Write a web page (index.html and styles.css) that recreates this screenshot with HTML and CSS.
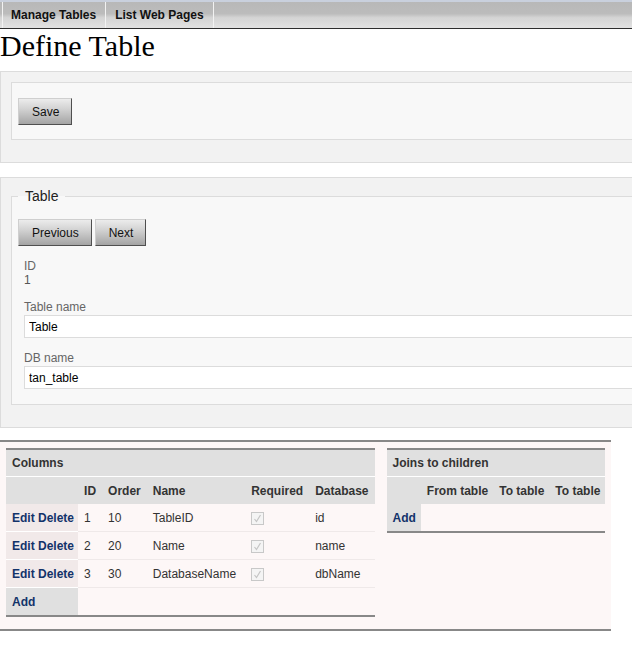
FILE: index.html
```html
<!DOCTYPE html>
<html>
<head>
<meta charset="utf-8">
<title>Define Table</title>
<link rel="stylesheet" href="styles.css">
</head>
<body>
<div class="tabbar">
  <a class="tab" href="#">Manage Tables</a>
  <a class="tab tab-last" href="#">List Web Pages</a>
</div>
<h1 class="title">Define Table</h1>

<div class="panel">
  <fieldset class="box box-plain">
    <div class="btnrow">
      <button class="btn" type="button">Save</button>
    </div>
  </fieldset>
</div>

<div class="panel">
  <fieldset class="box">
    <legend class="legend">Table</legend>
    <div class="btnrow">
      <button class="btn" type="button">Previous</button>
      <button class="btn" type="button">Next</button>
    </div>
    <div class="field">
      <div class="label">ID</div>
      <div class="value">1</div>
    </div>
    <div class="field">
      <div class="label">Table name</div>
      <input class="input" type="text" value="Table">
    </div>
    <div class="field">
      <div class="label">DB name</div>
      <input class="input" type="text" value="tan_table">
    </div>
  </fieldset>
</div>

<div class="grids">
  <table class="grid">
    <tr><th class="cap" colspan="7">Columns</th></tr>
    <tr class="head">
      <th></th><th>ID</th><th>Order</th><th class="namecol">Name</th><th>Required</th><th>Database</th>
    </tr>
    <tr class="row">
      <td class="act"><a href="#">Edit</a> <a href="#">Delete</a></td><td>1</td><td>10</td><td class="namecol">TableID</td><td><span class="chk"><svg width="11" height="11" viewBox="0 0 11 11"><path d="M2.5 6 L4.5 8.5 L8.5 2" fill="none" stroke="#c4c4c4" stroke-width="1.2"/></svg></span></td><td>id</td>
    </tr>
    <tr class="row">
      <td class="act"><a href="#">Edit</a> <a href="#">Delete</a></td><td>2</td><td>20</td><td class="namecol">Name</td><td><span class="chk"><svg width="11" height="11" viewBox="0 0 11 11"><path d="M2.5 6 L4.5 8.5 L8.5 2" fill="none" stroke="#c4c4c4" stroke-width="1.2"/></svg></span></td><td>name</td>
    </tr>
    <tr class="row">
      <td class="act"><a href="#">Edit</a> <a href="#">Delete</a></td><td>3</td><td>30</td><td class="namecol">DatabaseName</td><td><span class="chk"><svg width="11" height="11" viewBox="0 0 11 11"><path d="M2.5 6 L4.5 8.5 L8.5 2" fill="none" stroke="#c4c4c4" stroke-width="1.2"/></svg></span></td><td>dbName</td>
    </tr>
    <tr class="addrow">
      <td class="add"><a href="#">Add</a></td><td></td><td></td><td></td><td></td><td></td>
    </tr>
  </table>

  <table class="grid joins">
    <tr><th class="cap" colspan="4">Joins to children</th></tr>
    <tr class="head">
      <th></th><th>From table</th><th>To table</th><th>To table</th>
    </tr>
    <tr class="addrow">
      <td class="add"><a href="#">Add</a></td><td></td><td></td><td></td>
    </tr>
  </table>
</div>
</body>
</html>
```

FILE: styles.css
```css
html, body {
  margin: 0;
  padding: 0;
  background: #fff;
  overflow: hidden;
}

body {
  font-family: "Liberation Sans", Arial, sans-serif;
  font-size: 12px;
  color: #333;
}

.tabbar {
  display: flex;
  height: 26px;
  padding-left: 2px;
  border-top: 2px solid #c9d0dd;
  border-bottom: 1px solid #2e2e2e;
  background: linear-gradient(#b8b8b8 0%, #bcbcbc 45%, #d4d4d4 60%, #e2e2e2 100%);
}

.tab {
  display: flex;
  align-items: center;
  padding: 0 9px 0 8px;
  border-left: 1px solid #f2f2f2;
  font-weight: bold;
  font-size: 12px;
  color: #111;
  text-decoration: none;
}

.tab-last {
  border-right: 1px solid #f2f2f2;
  padding-left: 9px;
}

.title {
  margin: 0 0 8px;
  font-family: "Liberation Serif", "Times New Roman", serif;
  font-weight: normal;
  font-size: 30px;
  line-height: 34px;
  color: #000;
}

.panel {
  width: 900px;
  border: 1px solid #dcdcdc;
  background: #f2f2f2;
  padding: 10px;
  margin-bottom: 14px;
}

.box {
  margin: 0 0 12px;
  min-width: 0;
  border: 1px solid #dcdcdc;
  background: #f8f8f8;
  padding: 15px 6px 15px;
}

.box-plain {
  padding-bottom: 14px;
}

.legend {
  padding: 0 7px;
  font-size: 14px;
  line-height: 16px;
  color: #222;
}

.btnrow {
  display: flex;
  gap: 3px;
}

.btn {
  height: 27px;
  box-sizing: border-box;
  margin: 0;
  padding: 0 12px 0 13px;
  border: 1px solid;
  border-color: #cfcfcf #4f4f4f #4f4f4f #cfcfcf;
  background: linear-gradient(#ececec 0%, #d2d2d2 40%, #a4a4a4 100%);
  font-family: "Liberation Sans", Arial, sans-serif;
  font-size: 12px;
  color: #111;
}

.field {
  margin: 13px 0 0 6px;
}

.label {
  line-height: 14px;
  color: #666;
}

.value {
  line-height: 14px;
  color: #555;
}

.input {
  display: block;
  width: 100%;
  height: 23px;
  box-sizing: border-box;
  margin: 1px 0 0;
  padding: 0 4px;
  border: 1px solid #dcdcdc;
  background: #fff;
  font-family: "Liberation Sans", Arial, sans-serif;
  font-size: 12px;
  color: #000;
}

.grids {
  display: flex;
  align-items: flex-start;
  gap: 12px;
  width: fit-content;
  margin-top: -2px;
  padding: 6px 6px 12px;
  border-top: 2px solid #888;
  border-bottom: 2px solid #888;
  background: #fdf7f7;
}

.grid {
  border-collapse: collapse;
  border-top: 2px solid #888;
  border-bottom: 2px solid #888;
}

.grid th,
.grid td {
  height: 27px;
  padding: 0 6px;
  text-align: left;
  white-space: nowrap;
  vertical-align: middle;
  font-size: 12px;
  line-height: 14px;
}

.grid th {
  background: #e0e0e0;
  color: #333;
  font-weight: bold;
}

.grid .cap {
  border-bottom: 1px solid #fff;
  height: 26px;
}

.grid .namecol {
  padding-right: 9px;
}

.joins .head th {
  padding-right: 5px;
}

.joins .addrow td.add {
  padding-right: 5px;
}

.row td {
  border-bottom: 1px solid #efe9e9;
  color: #333;
}

.row td.act {
  padding-right: 4px;
  background: #f1e9e9;
  border-bottom-color: #fff;
}

.grid a {
  color: #13336a;
  font-weight: bold;
  text-decoration: none;
}

.addrow td.add {
  background: #e0e0e0;
}

.chk {
  display: inline-block;
  width: 13px;
  height: 13px;
  box-sizing: border-box;
  border: 1px solid #c8c8c8;
  background: #f4f4f4;
  vertical-align: middle;
}

.chk svg {
  display: block;
}
```
